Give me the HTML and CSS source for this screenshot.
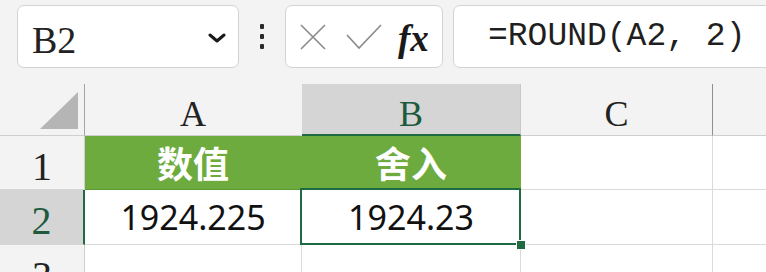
FILE: index.html
```html
<!DOCTYPE html>
<html>
  <head>
    <meta charset="UTF-8">
    <title>ROUND</title>
    <link rel="stylesheet" href="styles.css">
  </head>
  <body>
    <div class="toolbar">
      <div class="namebox">
        <span class="ref">B2</span>
        <svg class="chevron" width="18" height="10" viewBox="0 0 18 10">
          <path d="M2 2 L9 8 L16 2" fill="none" stroke="#1a1a1a" stroke-width="3" stroke-linecap="round" stroke-linejoin="round"/>
        </svg>
      </div>
      <div class="dots"><i></i><i></i><i></i></div>
      <div class="fxbox">
        <svg width="26" height="26" viewBox="0 0 26 26">
          <path d="M1 1 L25 25 M25 1 L1 25" stroke="#8a8a8a" stroke-width="1.6" fill="none"/>
        </svg>
        <svg class="check" width="36" height="26" viewBox="0 0 36 26">
          <path d="M1 11 L13 24 L35 1" stroke="#8a8a8a" stroke-width="1.6" fill="none"/>
        </svg>
        <span class="fx">fx</span>
      </div>
      <div class="formula">=ROUND(A2, 2)</div>
    </div>

    <div class="sheet">
      <div class="corner">
        <svg width="85" height="52" viewBox="0 0 85 52">
          <polygon points="40,45 78,45 78,8" fill="#b5b5b5"/>
        </svg>
      </div>
      <div class="colhead">A</div>
      <div class="colhead active">B</div>
      <div class="colhead">C</div>
      <div class="colhead"></div>

      <div class="rowhead">1</div>
      <div class="cell title">数值</div>
      <div class="cell title">舍入</div>
      <div class="cell"></div>
      <div class="cell"></div>

      <div class="rowhead active">2</div>
      <div class="cell num">1924.225</div>
      <div class="cell num selected">1924.23<span class="handle"></span></div>
      <div class="cell"></div>
      <div class="cell"></div>

      <div class="rowhead">3</div>
      <div class="cell"></div>
      <div class="cell"></div>
      <div class="cell"></div>
      <div class="cell"></div>
    </div>
  </body>
</html>
```

FILE: styles.css
```css
body {
  margin: 0;
  width: 766px;
  height: 272px;
  overflow: hidden;
  background: #f3f3f3;
  font-family: "Liberation Serif", serif;
  color: #222;
}

/* formula bar */
.toolbar {
  display: flex;
  align-items: flex-start;
  height: 84px;
  box-sizing: border-box;
  padding: 5px 0 0 17px;
}

.namebox,
.fxbox,
.formula {
  height: 63px;
  box-sizing: border-box;
  background: #fff;
  border: 1px solid #d3d3d3;
  border-radius: 7px;
  flex: none;
}

.namebox {
  width: 222px;
  display: flex;
  align-items: center;
  justify-content: space-between;
  padding: 6px 12px 0 14px;
}

.ref {
  font-size: 38px;
}

.chevron {
  margin-top: -4px;
}

.dots {
  width: 46px;
  height: 63px;
  display: flex;
  flex-direction: column;
  align-items: center;
  justify-content: center;
  gap: 5px;
  flex: none;
}

.dots i {
  display: block;
  width: 4px;
  height: 5px;
  border-radius: 1px;
  background: #2a2a2a;
}

.fxbox {
  width: 158px;
  display: flex;
  align-items: center;
  padding: 0 0 0 14px;
}

.check {
  margin-left: 20px;
}

.fx {
  margin-left: 16px;
  font-size: 37px;
  font-weight: bold;
  font-style: italic;
  color: #1a1a1a;
  margin-top: 4px;
}

.formula {
  width: 340px;
  margin-left: 10px;
  padding: 11px 0 0 34px;
  font-family: "Liberation Mono", monospace;
  font-size: 33px;
  line-height: 40px;
  color: #1f1f1f;
}

/* grid */
.sheet {
  display: grid;
  grid-template-columns: 85px 217px 219px 192px 60px;
  grid-template-rows: 52px 54px 55px 55px;
}

.sheet > div {
  box-sizing: border-box;
  border-right: 1px solid #dadada;
  border-bottom: 1px solid #dadada;
  text-align: center;
}

.corner {
  background: #f3f3f3;
  border-bottom-color: #cfcfcf !important;
  border-right-color: #a5a5a5 !important;
}

.corner svg {
  display: block;
}

.colhead {
  background: #f3f3f3;
  font-size: 36px;
  line-height: 40px;
  padding-top: 10px;
  border-right-color: #f3f3f3 !important;
  border-bottom-color: #cfcfcf !important;
}

.colhead:nth-child(4) {
  border-right-color: #8f8f8f !important;
}

.rowhead {
  background: #f3f3f3;
  font-size: 40px;
  line-height: 44px;
  padding-top: 9px;
  border-right-color: #cfcfcf !important;
  border-bottom-color: #d6d6d6 !important;
}

.colhead.active,
.rowhead.active {
  background: #d5d5d5;
  color: #1e5b3e;
}

.colhead.active {
  border-bottom: 2px solid #1e6b42 !important;
  border-right-color: #c9c9c9 !important;
}

.rowhead.active {
  border-right: 2px solid #1e6b42 !important;
}

.cell {
  background: #fff;
  position: relative;
}

.title {
  background: #6dab3f !important;
  border-right-color: #6dab3f !important;
  border-bottom-color: #5c9a35 !important;
  color: #fff;
  font-family: "Noto Sans CJK SC", sans-serif;
  font-weight: bold;
  font-size: 36px;
  line-height: 52px;
}

.num {
  font-family: "Noto Sans", sans-serif;
  font-size: 34px;
  line-height: 54px;
  color: #111;
}

.selected::after {
  content: "";
  position: absolute;
  top: -2px;
  left: -2px;
  right: -1px;
  bottom: -1px;
  border: 2px solid #1e6b42;
  pointer-events: none;
}

.handle {
  position: absolute;
  right: -6px;
  bottom: -6px;
  width: 8px;
  height: 8px;
  background: #1e6b42;
  border: 1px solid #fff;
  z-index: 2;
}
```
